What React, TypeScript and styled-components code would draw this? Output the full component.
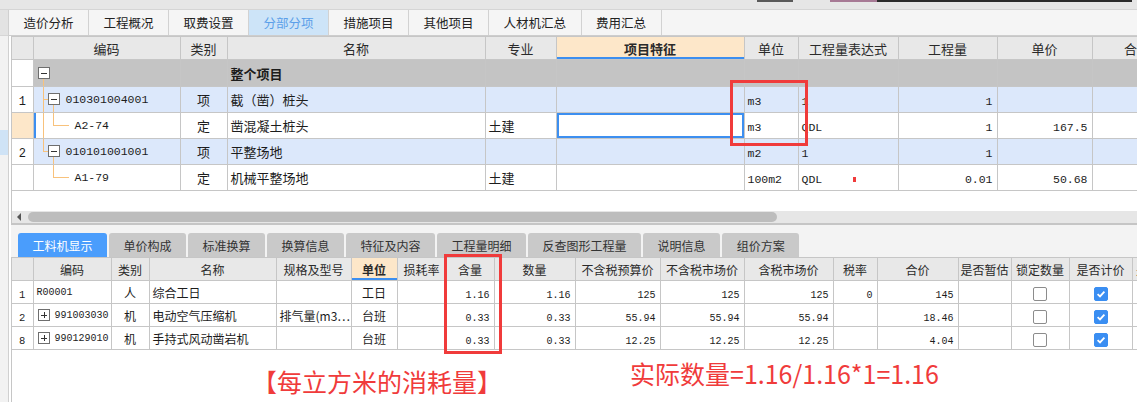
import React from "react";
import styled, { createGlobalStyle } from "styled-components";

const C = {
  border: "#c6c6c6",
  head: "#e8e8e8",
  peach: "#fde7c9",
  blue: "#3d8ff0",
  rowBlue: "#dce8fb",
  group: "#c4c4c4",
  red: "#f03b3b",
  tree: "#f8c27c",
};

const GlobalStyle = createGlobalStyle`
  html, body {
    margin: 0;
    padding: 0;
    background: #fff;
  }
  body {
    font-family: "Noto Sans CJK SC", "Noto Sans", sans-serif;
    overflow: hidden;
  }
  * {
    box-sizing: border-box;
  }
`;

type Align = "left" | "center" | "right";
type Tone = "white" | "peach" | "group" | "bill";
type TreeVariant = "root" | "billMid" | "billLast" | "quotaMid" | "quotaLast";

const toneBg = (t?: Tone) =>
  t === "peach"
    ? C.peach
    : t === "white"
    ? "#fff"
    : t === "group"
    ? C.group
    : t === "bill"
    ? C.rowBlue
    : "transparent";

const Page = styled.div`
  position: relative;
  width: 1137px;
  height: 402px;
  overflow: hidden;
  display: flex;
  flex-direction: column;
  background: #fff;
  color: #222;
`;

const TopBar = styled.div`
  height: 10px;
  flex: none;
  background: #e6e6e6;
  border-bottom: 1px solid #d5d5d5;
  display: flex;
  align-items: flex-start;
  justify-content: flex-end;
  padding-right: 5px;
`;

const TopScrap = styled.span<{ $w: number; $c: string; $gap: number }>`
  width: ${(p) => p.$w}px;
  height: 2px;
  margin-left: ${(p) => p.$gap}px;
  background: ${(p) => p.$c};
`;

const Body = styled.div`
  flex: 1;
  display: flex;
  min-height: 0;
`;

const SideStrip = styled.div`
  width: 9px;
  flex: none;
  display: flex;
  flex-direction: column;
  background: #f2f2f2;
  border-right: 1px solid #d0d0d0;
`;

const StripCap = styled.div`
  height: 26px;
  background: #e3e3e3;
  border-bottom: 1px solid #d6d6d6;
`;

const StripMark = styled.div`
  height: 25px;
  margin-top: 94px;
  background: #cfe3f6;
`;

const Main = styled.div`
  flex: 1;
  min-width: 0;
  display: flex;
  flex-direction: column;
`;

const ModuleTabs = styled.div`
  height: 26px;
  flex: none;
  display: flex;
  background: #f5f5f5;
  border-bottom: 1px solid #cdcdcd;
`;

const ModuleTab = styled.div<{ $active?: boolean }>`
  display: flex;
  align-items: center;
  padding: 0 14.5px;
  font-size: 12.5px;
  color: ${(p) => (p.$active ? "#5b9fe9" : "#222")};
  background: ${(p) => (p.$active ? "#cde4f8" : "transparent")};
  border-right: 1px solid #d2d2d2;
`;

const Workspace = styled.div`
  flex: 1;
  min-height: 0;
  display: flex;
  flex-direction: column;
  padding-left: 2px;
`;

const UpperPanel = styled.div`
  height: 189px;
  flex: none;
  display: flex;
  flex-direction: column;
  border-left: 1px solid ${C.border};
  border-bottom: 2px solid #c5c5c5;
`;

const Viewport = styled.div`
  flex: 1;
  min-height: 0;
  overflow: hidden;
  background: #fff;
`;

const HScroll = styled.div`
  height: 12px;
  flex: none;
  display: flex;
  align-items: center;
  padding-left: 5px;
  background: #e6e6e6;
`;

const ScrollArrow = styled.span`
  width: 0;
  height: 0;
  border-top: 4px solid transparent;
  border-bottom: 4px solid transparent;
  border-right: 4px solid #555;
`;

const ScrollThumb = styled.span`
  width: 749px;
  height: 10px;
  margin-left: 7px;
  border-radius: 5px;
  background: #bdbdbd;
`;

const DetailTabs = styled.div`
  height: 32px;
  flex: none;
  display: flex;
  align-items: flex-end;
  gap: 2px;
  padding-left: 7px;
  background: #f3f3f3;
`;

const DetailTab = styled.div<{ $active?: boolean }>`
  height: 24px;
  display: flex;
  align-items: center;
  padding: 0 14.5px;
  border-radius: 3px 3px 0 0;
  font-size: 12px;
  color: ${(p) => (p.$active ? "#fff" : "#333")};
  background: ${(p) => (p.$active ? "#4a9dfc" : "#c9c9c9")};
`;

const LowerPanel = styled.div`
  flex: 1;
  min-height: 0;
  overflow: hidden;
  border-left: 1px solid ${C.border};
  background: #fff;
`;

const Grid = styled.table<{ $w: number; $fs: number }>`
  width: ${(p) => p.$w}px;
  table-layout: fixed;
  border-collapse: collapse;
  font-size: ${(p) => p.$fs}px;
  color: #1c1c1c;
`;

const Col = styled.col<{ $w: number }>`
  width: ${(p) => p.$w}px;
`;

const GridRow = styled.tr<{ $h: number; $tone?: Tone }>`
  height: ${(p) => p.$h}px;
  background: ${(p) => toneBg(p.$tone)};
`;

const HeadCell = styled.th<{ $hl?: boolean }>`
  padding: 0;
  border: 1px solid ${C.border};
  background: ${(p) => (p.$hl ? C.peach : C.head)};
  box-shadow: ${(p) => (p.$hl ? `inset 0 -2px 0 ${C.blue}` : "none")};
  font-weight: ${(p) => (p.$hl ? 700 : 400)};
  color: #2a2a2a;
  text-align: center;
  white-space: nowrap;
  overflow: hidden;
  &:first-child {
    border-left: none;
  }
`;

const Cell = styled.td<{
  $align?: Align;
  $tone?: Tone;
  $flush?: boolean;
  $focus?: boolean;
  $marker?: boolean;
}>`
  padding: ${(p) => (p.$flush ? "0" : p.$align === "right" ? "0 4px 0 3px" : "0 3px")};
  border: 1px solid ${C.border};
  text-align: ${(p) => p.$align ?? "left"};
  background: ${(p) => (p.$tone ? toneBg(p.$tone) : "transparent")};
  box-shadow: ${(p) =>
    p.$focus
      ? `inset 0 0 0 2px ${C.blue}`
      : p.$marker
      ? `inset 2px 0 0 ${C.blue}`
      : "none"};
  white-space: nowrap;
  overflow: hidden;
  &:first-child {
    border-left: none;
  }
`;

const Mono = styled.span<{ $fs: number }>`
  font-family: "Liberation Mono", "Noto Sans CJK SC", monospace;
  font-size: ${(p) => p.$fs}px;
`;

const GroupTitle = styled.span`
  font-weight: 700;
`;

const TreeWrap = styled.div<{ $h: number }>`
  height: ${(p) => p.$h}px;
  display: flex;
  align-items: center;
`;

const CodeWrap = styled.div`
  display: flex;
  align-items: center;
  gap: 5px;
`;

const FlagTick = styled.span`
  display: inline-block;
  width: 3px;
  height: 5px;
  margin-left: 31px;
  vertical-align: middle;
  background: ${C.red};
`;

const Box = styled.span<{ $on?: boolean }>`
  width: 14px;
  height: 14px;
  display: inline-flex;
  align-items: center;
  justify-content: center;
  vertical-align: middle;
  border-radius: 2px;
  border: 1px solid ${(p) => (p.$on ? "#3a8ef2" : "#8c8c8c")};
  background: ${(p) => (p.$on ? "#3a8ef2" : "#fff")};
`;

const NoteRow = styled.div`
  display: flex;
  align-items: flex-start;
  padding-left: 240px;
`;

const Note = styled.div<{ $w?: number; $top: number }>`
  width: ${(p) => (p.$w ? `${p.$w}px` : "auto")};
  margin-top: ${(p) => p.$top}px;
  color: ${C.red};
  font-size: 25px;
  line-height: 1;
  white-space: nowrap;
`;

const RedFrame = styled.div<{ $x: number; $y: number; $w: number; $h: number }>`
  position: absolute;
  left: ${(p) => p.$x}px;
  top: ${(p) => p.$y}px;
  width: ${(p) => p.$w}px;
  height: ${(p) => p.$h}px;
  border: 3px solid ${C.red};
  pointer-events: none;
`;

function TreeLines({ variant, h }: { variant: TreeVariant; h: number }) {
  const cy = Math.floor(h / 2) + 0.5;
  const width = variant === "root" ? 20 : variant.startsWith("bill") ? 32 : 41;
  const orange: string[] = [];
  let bx = -1;
  if (variant === "root") {
    bx = 4;
    orange.push(`M9.5 ${cy + 5} V${h}`);
  }
  if (variant === "billMid" || variant === "billLast") {
    bx = 14;
    orange.push(`M9.5 0 V${variant === "billMid" ? h : cy}`);
    orange.push(`M9.5 ${cy} H14`);
    orange.push(`M19.5 ${cy + 5} V${h}`);
  }
  if (variant === "quotaMid" || variant === "quotaLast") {
    if (variant === "quotaMid") orange.push(`M9.5 0 V${h}`);
    orange.push(`M19.5 0 V${cy} H35`);
  }
  return (
    <svg width={width} height={h} shapeRendering="crispEdges" style={{ flex: "none" }}>
      <path d={orange.join(" ")} stroke={C.tree} strokeWidth={1} fill="none" />
      {bx >= 0 && (
        <g>
          <rect x={bx + 0.5} y={cy - 6} width={11} height={11} fill="#fff" stroke="#6e6e6e" />
          <path d={`M${bx + 3} ${cy - 0.5} H${bx + 9}`} stroke="#333" strokeWidth={1} />
        </g>
      )}
    </svg>
  );
}

const PlusBox = () => (
  <svg width={12} height={12} shapeRendering="crispEdges" style={{ flex: "none", marginLeft: 1 }}>
    <rect x={0.5} y={0.5} width={11} height={11} fill="#fff" stroke="#6e6e6e" />
    <path d="M3 6 H9 M6 3 V9" stroke="#333" strokeWidth={1} />
  </svg>
);

const CheckMark = () => (
  <svg width={10} height={10} viewBox="0 0 10 10">
    <path d="M1.6 5.2 L4 7.4 L8.4 2.6" stroke="#fff" strokeWidth={1.8} fill="none" />
  </svg>
);

const moduleTabs = ["造价分析", "工程概况", "取费设置", "分部分项", "措施项目", "其他项目", "人材机汇总", "费用汇总"];
const detailTabs = ["工料机显示", "单价构成", "标准换算", "换算信息", "特征及内容", "工程量明细", "反查图形工程量", "说明信息", "组价方案"];

const upperCols = [21, 147, 47, 258, 71, 188, 54, 100, 99, 95, 90];
const upperHeads = ["", "编码", "类别", "名称", "专业", "项目特征", "单位", "工程量表达式", "工程量", "单价", "合价"];

interface UpperRowData {
  no: string;
  tree: TreeVariant;
  code: string;
  type: string;
  name: string;
  major: string;
  unit: string;
  expr: string;
  qty: string;
  price: string;
  current?: boolean;
  flag?: boolean;
}

const upperRows: UpperRowData[] = [
  { no: "1", tree: "billMid", code: "010301004001", type: "项", name: "截（凿）桩头", major: "", unit: "m3", expr: "1", qty: "1", price: "" },
  { no: "", tree: "quotaMid", code: "A2-74", type: "定", name: "凿混凝土桩头", major: "土建", unit: "m3", expr: "QDL", qty: "1", price: "167.5", current: true },
  { no: "2", tree: "billLast", code: "010101001001", type: "项", name: "平整场地", major: "", unit: "m2", expr: "1", qty: "1", price: "" },
  { no: "", tree: "quotaLast", code: "A1-79", type: "定", name: "机械平整场地", major: "土建", unit: "100m2", expr: "QDL", qty: "0.01", price: "50.68", flag: true },
];

const lowerCols = [21, 78, 38, 127, 75, 46, 49, 48, 81, 85, 84, 89, 44, 81, 53, 58, 63, 56];
const lowerHeads = ["", "编码", "类别", "名称", "规格及型号", "单位", "损耗率", "含量", "数量", "不含税预算价", "不含税市场价", "含税市场价", "税率", "合价", "是否暂估", "锁定数量", "是否计价", "是否主材"];

const lowerRows = [
  { no: "1", code: "R00001", plus: false, type: "人", name: "综合工日", spec: "", unit: "工日", content: "1.16", qty: "1.16", budget: "125", market: "125", taxMarket: "125", rate: "0", total: "145" },
  { no: "2", code: "991003030", plus: true, type: "机", name: "电动空气压缩机", spec: "排气量(m3…", unit: "台班", content: "0.33", qty: "0.33", budget: "55.94", market: "55.94", taxMarket: "55.94", rate: "", total: "18.46" },
  { no: "8", code: "990129010", plus: true, type: "机", name: "手持式风动凿岩机", spec: "", unit: "台班", content: "0.33", qty: "0.33", budget: "12.25", market: "12.25", taxMarket: "12.25", rate: "", total: "4.04" },
];

const sum = (a: number[]) => a.reduce((s, n) => s + n, 0);

const UpperTable = () => (
  <Grid $w={sum(upperCols)} $fs={13}>
    <colgroup>
      {upperCols.map((w, i) => (
        <Col key={i} $w={w} />
      ))}
    </colgroup>
    <tbody>
      <GridRow $h={23}>
        {upperHeads.map((h, i) => (
          <HeadCell key={i} $hl={h === "项目特征"}>
            {h}
          </HeadCell>
        ))}
      </GridRow>
      <GridRow $h={27} $tone="group">
        <Cell $tone="white" />
        <Cell $flush>
          <TreeWrap $h={26}>
            <TreeLines variant="root" h={26} />
          </TreeWrap>
        </Cell>
        <Cell />
        <Cell>
          <GroupTitle>整个项目</GroupTitle>
        </Cell>
        {Array.from({ length: 7 }).map((_, i) => (
          <Cell key={i} />
        ))}
      </GridRow>
      {upperRows.map((r, i) => (
        <GridRow key={i} $h={26} $tone={r.tree.startsWith("bill") ? "bill" : "white"}>
          <Cell $align="center" $tone={r.current ? "peach" : "white"}>
            <Mono $fs={12}>{r.no}</Mono>
          </Cell>
          <Cell $flush $marker={r.current}>
            <TreeWrap $h={25}>
              <TreeLines variant={r.tree} h={25} />
              <Mono $fs={11.5}>{r.code}</Mono>
            </TreeWrap>
          </Cell>
          <Cell $align="center">{r.type}</Cell>
          <Cell>{r.name}</Cell>
          <Cell>{r.major}</Cell>
          <Cell $focus={r.current} />
          <Cell>
            <Mono $fs={11.5}>{r.unit}</Mono>
          </Cell>
          <Cell>
            <Mono $fs={11.5}>{r.expr}</Mono>
            {r.flag && <FlagTick />}
          </Cell>
          <Cell $align="right">
            <Mono $fs={11.5}>{r.qty}</Mono>
          </Cell>
          <Cell $align="right">
            <Mono $fs={11.5}>{r.price}</Mono>
          </Cell>
          <Cell />
        </GridRow>
      ))}
    </tbody>
  </Grid>
);

const LowerTable = () => (
  <Grid $w={sum(lowerCols)} $fs={12}>
    <colgroup>
      {lowerCols.map((w, i) => (
        <Col key={i} $w={w} />
      ))}
    </colgroup>
    <tbody>
      <GridRow $h={23}>
        {lowerHeads.map((h, i) => (
          <HeadCell key={i} $hl={h === "单位"}>
            {h}
          </HeadCell>
        ))}
      </GridRow>
      {lowerRows.map((r) => (
        <GridRow key={r.no} $h={23} $tone="white">
          <Cell $align="center">
            <Mono $fs={10.5}>{r.no}</Mono>
          </Cell>
          <Cell>
            <CodeWrap>
              {r.plus && <PlusBox />}
              <Mono $fs={10}>{r.code}</Mono>
            </CodeWrap>
          </Cell>
          <Cell $align="center">{r.type}</Cell>
          <Cell>{r.name}</Cell>
          <Cell>{r.spec}</Cell>
          <Cell $align="center">{r.unit}</Cell>
          <Cell />
          <Cell $align="right">
            <Mono $fs={10}>{r.content}</Mono>
          </Cell>
          <Cell $align="right">
            <Mono $fs={10}>{r.qty}</Mono>
          </Cell>
          <Cell $align="right">
            <Mono $fs={10}>{r.budget}</Mono>
          </Cell>
          <Cell $align="right">
            <Mono $fs={10}>{r.market}</Mono>
          </Cell>
          <Cell $align="right">
            <Mono $fs={10}>{r.taxMarket}</Mono>
          </Cell>
          <Cell $align="right">
            <Mono $fs={10}>{r.rate}</Mono>
          </Cell>
          <Cell $align="right">
            <Mono $fs={10}>{r.total}</Mono>
          </Cell>
          <Cell />
          <Cell $align="center">
            <Box />
          </Cell>
          <Cell $align="center">
            <Box $on>
              <CheckMark />
            </Box>
          </Cell>
          <Cell />
        </GridRow>
      ))}
    </tbody>
  </Grid>
);

const App = () => (
  <Page>
    <GlobalStyle />
    <TopBar>
      <TopScrap $w={36} $c="#5a5a5a" $gap={0} />
      <TopScrap $w={47} $c="#a77a95" $gap={37} />
      <TopScrap $w={255} $c="#2b2b2b" $gap={0} />
    </TopBar>
    <Body>
      <SideStrip>
        <StripCap />
        <StripMark />
      </SideStrip>
      <Main>
        <ModuleTabs>
          {moduleTabs.map((t) => (
            <ModuleTab key={t} $active={t === "分部分项"}>
              {t}
            </ModuleTab>
          ))}
        </ModuleTabs>
        <Workspace>
          <UpperPanel>
            <Viewport>
              <UpperTable />
            </Viewport>
            <HScroll>
              <ScrollArrow />
              <ScrollThumb />
            </HScroll>
          </UpperPanel>
          <DetailTabs>
            {detailTabs.map((t) => (
              <DetailTab key={t} $active={t === "工料机显示"}>
                {t}
              </DetailTab>
            ))}
          </DetailTabs>
          <LowerPanel>
            <LowerTable />
            <NoteRow>
              <Note $w={378} $top={19}>【每立方米的消耗量】</Note>
              <Note $top={11}>实际数量=1.16/1.16*1=1.16</Note>
            </NoteRow>
          </LowerPanel>
        </Workspace>
      </Main>
    </Body>
    <RedFrame $x={730} $y={80} $w={78} $h={66} />
    <RedFrame $x={444} $y={254} $w={58} $h={100} />
  </Page>
);

export default App;
